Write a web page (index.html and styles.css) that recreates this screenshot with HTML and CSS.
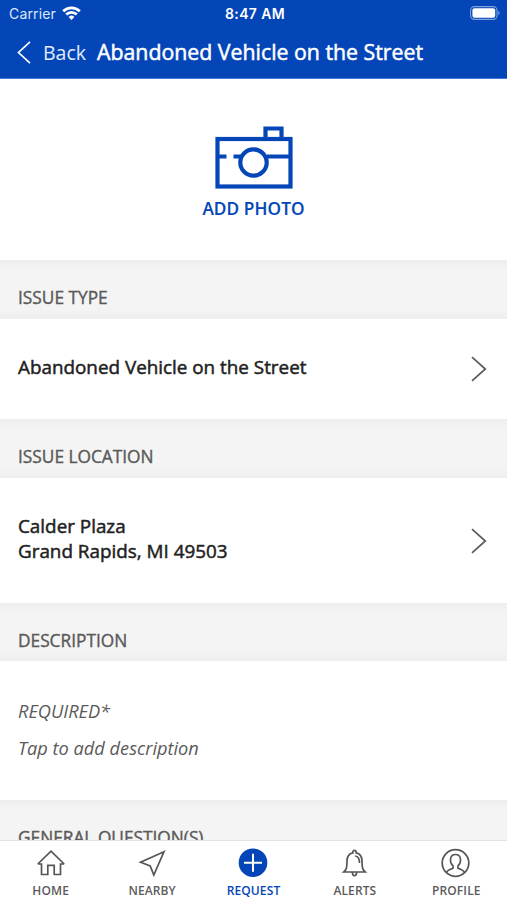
FILE: index.html
```
<!DOCTYPE html>
<html lang="en">
<head>
<meta charset="utf-8">
<title>Abandoned Vehicle on the Street</title>
<link rel="stylesheet" href="styles.css">
</head>
<body>
<div class="app">
  <header class="header">
    <div class="status">
      <div class="carrier"><span>Carrier</span>
        <svg width="19" height="14" viewBox="0 0 19 14" fill="none" stroke="#fff" stroke-width="2.8"><path d="M1.200 5.200a11.800 11.800 0 0 1 16.600 0M4.200 8.600a7.500 7.500 0 0 1 10.600 0"/><path d="M9.500 14 6.600 11a4.200 4.200 0 0 1 5.800 0z" fill="#fff" stroke="none"/></svg>
      </div>
      <div class="time">8:47 AM</div>
      <svg class="battery" width="31" height="14" viewBox="0 0 31 14"><rect x=".6" y=".6" width="26.400" height="12.800" rx="3.800" fill="none" stroke="#7fa2dc" stroke-width="1.100"/><rect x="2.400" y="2.300" width="22.800" height="9.400" rx="2" fill="#fff"/><path d="M28.300 4.800v4.400c1.800-.7 1.800-3.700 0-4.400z" fill="#7fa2dc"/></svg>
    </div>
    <div class="nav">
      <svg width="14" height="23" viewBox="0 0 14 23" fill="none" stroke="#fff" stroke-width="1.700"><path d="M13 .8 1.500 11.500 13 22.200"/></svg>
      <span class="back">Back</span>
      <h1 class="title">Abandoned Vehicle on the Street</h1>
    </div>
  </header>
  <main class="content">
    <div class="photo">
      <svg width="78" height="63" viewBox="0 0 78 63" fill="none" stroke="#0446b8" stroke-width="4.200"><rect x="2.500" y="13" width="73" height="47.500"/><path d="M50.500 13V2.500H66.500V13M3 30.500H11.500M18.500 30.500H26M52 30.500H75"/><circle cx="38.500" cy="36.500" r="13.200"/></svg>
      <span class="photo-label">ADD PHOTO</span>
    </div>
    <h2 class="section">ISSUE TYPE</h2>
    <div class="row row-type"><p class="value">Abandoned Vehicle on the Street</p>
      <svg class="chevron" width="16" height="26" viewBox="0 0 16 26"><path d="M1 1.200 14.300 13 1 24.800"/></svg></div>
    <h2 class="section">ISSUE LOCATION</h2>
    <div class="row row-location"><p class="value"><span>Calder Plaza</span><br><span>Grand Rapids, MI 49503</span></p>
      <svg class="chevron" width="16" height="26" viewBox="0 0 16 26"><path d="M1 1.200 14.300 13 1 24.800"/></svg></div>
    <h2 class="section section-description">DESCRIPTION</h2>
    <div class="description"><p class="required">REQUIRED*</p><p class="hint">Tap to add description</p></div>
    <h2 class="section section-general">GENERAL QUESTION(S)</h2>
  </main>
  <nav class="tabs">
    <div class="tab"><svg width="30" height="30" viewBox="0 0 30 30"><path d="M1.800 16 15 3.200 28.200 16M1.800 16h3.700V26.500h6.300V17.300h6.400V26.500h6.300V16H28.200"/></svg><span>HOME</span></div>
    <div class="tab"><svg width="30" height="30" viewBox="0 0 30 30"><path d="M27 3.700 3.500 14.200 13.200 18 16.800 27z"/></svg><span>NEARBY</span></div>
    <div class="tab active"><svg width="30" height="30" viewBox="0 0 30 30"><circle class="disc" cx="15" cy="14.700" r="14.300"/><path class="plus" d="M15 5.700v18M6 14.700h18"/></svg><span>REQUEST</span></div>
    <div class="tab"><svg width="30" height="30" viewBox="0 0 30 30"><path d="M3.800 24h21.400c-2.800-2.500-3.200-4.500-3.200-11 0-4.500-2.500-7.500-5.800-8.200a1.800 1.800 0 1 0-3.400 0c-3.300.7-5.800 3.700-5.800 8.200 0 6.500-.4 8.500-3.200 11z"/><path d="M12.300 24c.3 5 4.100 5 4.400 0M15.200 8c3.200.3 4.300 2.500 4.300 7"/></svg><span>ALERTS</span></div>
    <div class="tab"><svg width="30" height="30" viewBox="0 0 30 30"><circle cx="14.500" cy="15" r="13.300"/><path d="M5.500 24.500c.8-2.200 3.200-3.200 6.500-4.300v-2.400c-3.600-3-3.800-11.300 2.500-11.300s6.100 8.300 2.500 11.300v2.400c3.300 1.100 5.700 2.100 6.500 4.300"/></svg><span>PROFILE</span></div>
  </nav>
</div>
</body>
</html>
```
FILE: styles.css
```
* { box-sizing: border-box; }
body { margin: 0; font-family: "Open Sans", "Noto Sans", sans-serif; color: #222; background: #fff; }
h1, h2, p { margin: 0; }
svg { display: block; flex: none; }
.app { width: 507px; height: 900px; display: flex; flex-direction: column; overflow: hidden; }
.header { flex: none; height: 79px; background: #0446b8; color: #fff; border-bottom: 1px solid #3f7bd2; }
.status { height: 26px; display: grid; grid-template-columns: 1fr auto 1fr; align-items: center; padding: 0 6px 0 9px; font-family: Inter, sans-serif; font-size: 14px; }
.carrier { display: flex; align-items: center; gap: 6px; color: #dce8fb; letter-spacing: .15px; }
.time { font-weight: 600; letter-spacing: .35px; }
.battery { justify-self: end; }
.nav { height: 53px; display: flex; align-items: center; padding-left: 17px; }
.back { margin-left: 12px; font-size: 19.500px; line-height: 26px; color: #e3edfc; }
.title { margin-left: 11px; font-size: 21.300px; line-height: 26px; padding-bottom: 2px; font-weight: 400; -webkit-text-stroke: .5px currentColor; white-space: nowrap; }
.content { flex: 1; min-height: 0; overflow: hidden; }
.photo { height: 181px; display: flex; flex-direction: column; align-items: center; padding-top: 47px; }
.photo-label { margin-top: 8px; line-height: 23px; font-size: 17.200px; font-weight: 600; letter-spacing: .1px; -webkit-text-stroke: .15px currentColor; color: #0446b8; }
.section { height: 59px; padding: 26px 18px 0; font-size: 17.300px; line-height: 24px; font-weight: 400; -webkit-text-stroke: .4px currentColor; color: #5a5a5a; background: linear-gradient(#ededed, #f4f4f4 9px, #f4f4f4 49px, #eeeeee); }
.section-description { height: 58px; }
.section-general { height: 60px; }
.row { display: flex; align-items: center; justify-content: space-between; padding: 0 20px 0 18px; }
.row-type { height: 100px; }
.row-location { height: 125px; }
.value { font-size: 18.850px; line-height: 25px; padding-bottom: 4px; font-weight: 400; -webkit-text-stroke: .5px currentColor; }
.chevron { fill: none; stroke: #5a5a5a; stroke-width: 1.700; }
.description { height: 139px; padding: 38px 18px 0; font-size: 18.200px; font-style: italic; color: #5a5a5a; }
.required { line-height: 25px; }
.hint { line-height: 25px; margin-top: 12px; }
.tabs { flex: none; height: 60px; display: grid; grid-template-columns: repeat(5, 1fr); border-top: 1px solid #e2e2e2; background: #fff; }
.tab { display: flex; flex-direction: column; align-items: center; padding-top: 7px; font-size: 12px; font-weight: 600; line-height: 16px; color: #5c5c5c; }
.tab svg { fill: none; stroke: #565656; stroke-width: 1.700; }
.tab span { margin-top: 5px; letter-spacing: .12px; }
.tab .disc { fill: #0446b8; stroke: none; }
.tab .plus { stroke: #fff; stroke-width: 2; }
.active { color: #0446b8; }
```
